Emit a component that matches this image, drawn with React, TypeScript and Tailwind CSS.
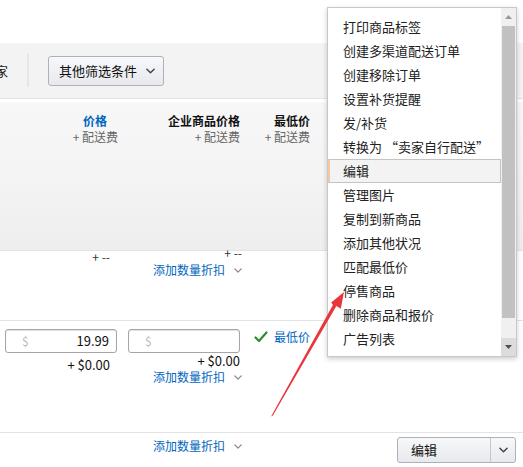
import React from "react";

const menuItems = [
  "打印商品标签",
  "创建多渠道配送订单",
  "创建移除订单",
  "设置补货提醒",
  "发/补货",
  "转换为 “卖家自行配送”",
  "编辑",
  "管理图片",
  "复制到新商品",
  "添加其他状况",
  "匹配最低价",
  "停售商品",
  "删除商品和报价",
  "广告列表",
];

const Chevron = ({ className = "", color = "#555" }: { className?: string; color?: string }) => (
  <svg className={className} viewBox="0 0 10 6" fill="none">
    <path d="M1 1l4 4 4-4" stroke={color} strokeWidth={1.6} strokeLinecap="round" strokeLinejoin="round" />
  </svg>
);

const Discount = () => (
  <div className="flex items-center gap-[9px] text-[12px] leading-[16px] text-[#0066c0]">
    <span>添加数量折扣</span>
    <Chevron className="h-[5px] w-[8px]" color="#888" />
  </div>
);

const PriceInput = ({ value }: { value?: string }) => (
  <div className="flex h-[24px] w-[112px] items-center justify-between rounded-[3px] border border-[#a6a6a6] px-[7px] shadow-[inset_0_1px_1px_rgba(0,0,0,0.12)]">
    <span className="pl-[9px] text-[12px] text-[#bbb]">$</span>
    <span className="text-[13px] text-[#111]">{value}</span>
  </div>
);

export default function App() {
  return (
    <div
      className="relative h-[467px] w-[523px] overflow-hidden bg-white text-[#111]"
      style={{ fontFamily: '"Noto Sans CJK SC", "Liberation Sans", sans-serif' }}
    >
      {/* top strip */}
      <div className="h-[43px] bg-white" />

      {/* filter bar */}
      <div className="flex h-[56px] items-center border-b border-[#e3e3e3] bg-[#f3f3f3]">
        <span className="-ml-[5px] text-[13px] text-[#222]">家</span>
        <div className="ml-[19px] h-[33px] w-[2px] bg-[#e6e6e6]" />
        <button className="ml-[19px] flex h-[30px] w-[116px] items-center gap-[9px] rounded-[3px] border border-[#adb1b8] bg-gradient-to-b from-[#f7f8fa] to-[#e7e9ec] pl-[10px] text-[13px] text-[#111]">
          <span>其他筛选条件</span>
          <Chevron className="h-[6px] w-[9px]" color="#444" />
        </button>
      </div>

      {/* table header */}
      <div className="mt-[3px] h-[148px] border-t border-[#fafafa] bg-gradient-to-b from-[#f7f7f7] via-[#f4f4f4] to-[#eeeeee]">
        <div className="flex pt-[10px] text-[12px] leading-[16px]">
          <div className="flex w-[118px] flex-col items-end">
            <span className="mr-[11px] font-bold text-[#0066c0]">价格</span>
            <span className="text-[#666]">+ 配送费</span>
          </div>
          <div className="flex w-[122px] flex-col items-end">
            <span className="font-bold text-[#111]">企业商品价格</span>
            <span className="text-[#666]">+ 配送费</span>
          </div>
          <div className="flex w-[70px] flex-col items-end">
            <span className="font-bold text-[#111]">最低价</span>
            <span className="text-[#666]">+ 配送费</span>
          </div>
        </div>
      </div>

      {/* row 1 */}
      <div className="flex h-[70px] border-t border-[#e3e3e3]">
        <div className="flex w-[110px] justify-end text-[12px] leading-[12px] text-[#333]">+ --</div>
        <div className="flex w-[132px] flex-col items-end">
          <span className="-mt-[4px] text-[12px] leading-[12px] text-[#333]">+ --</span>
          <div className="mt-[3px]">
            <Discount />
          </div>
        </div>
      </div>

      {/* row 2 */}
      <div className="flex h-[112px] border-t border-[#e3e3e3] pt-[8px]">
        <div className="ml-[5px] flex w-[112px] flex-col items-end">
          <PriceInput value="19.99" />
          <span className="mt-[4px] mr-[7px] text-[13px] leading-[16px] text-[#111]">+ $0.00</span>
        </div>
        <div className="ml-[11px] flex w-[114px] flex-col items-end">
          <div className="mr-[2px]">
            <PriceInput />
          </div>
          <span className="mr-[2px] text-[13px] leading-[16px] text-[#111]">+ $0.00</span>
          <Discount />
        </div>
        <div className="ml-[12px] flex items-start gap-[6px]">
          <svg className="mt-[2px] h-[12px] w-[14px]" viewBox="0 0 14 12" fill="none">
            <path d="M1.5 6.5l3.5 3.5 7.5-8.5" stroke="#2e8b2e" strokeWidth={2.2} strokeLinecap="round" strokeLinejoin="round" />
          </svg>
          <span className="text-[12px] leading-[16px] text-[#0066c0]">最低价</span>
        </div>
      </div>

      {/* row 3 */}
      <div className="flex h-[40px] items-start border-t border-[#e3e3e3]">
        <div className="flex w-[242px] justify-end pt-[5px]">
          <Discount />
        </div>
        <div className="ml-[155px] mt-[4px] flex h-[26px] w-[119px] overflow-hidden rounded-[3px] border border-[#adb1b8] bg-gradient-to-b from-[#f7f8fa] to-[#e7e9ec]">
          <span className="flex w-[93px] items-center border-r border-[#c5c7cb] pl-[13px] text-[13px] text-[#111]">编辑</span>
          <span className="flex flex-1 items-center justify-center">
            <Chevron className="h-[6px] w-[9px]" color="#444" />
          </span>
        </div>
      </div>

      {/* dropdown menu */}
      <div className="absolute left-[327px] top-[7px] flex h-[350px] w-[190px] border border-[#c8c8c8] bg-white shadow-[0_2px_5px_rgba(0,0,0,0.2)]">
        <div className="flex flex-1 flex-col pt-[7px]">
          {menuItems.map((item) =>
            item === "编辑" ? (
              <div
                key={item}
                className="flex h-[24px] items-center border border-[#c4c4c4] border-l-[2px] border-l-[#f4c9a0] bg-[#f3f3f3] pl-[13px] text-[13px] text-[#222]"
              >
                {item}
              </div>
            ) : (
              <div key={item} className="flex h-[24px] items-center pl-[15px] text-[13px] text-[#222]">
                {item}
              </div>
            )
          )}
        </div>
        <div className="flex w-[15px] flex-col bg-[#f0f0f0]">
          <div className="flex h-[18px] items-center justify-center">
            <svg className="h-[4px] w-[7px]" viewBox="0 0 7 4">
              <path d="M0 4L3.5 0 7 4z" fill="#999" />
            </svg>
          </div>
          <div className="mx-[1px] h-[292px] bg-[#c1c1c1]" />
          <div className="flex-1" />
          <div className="flex h-[18px] items-center justify-center bg-[#dcdcdc]">
            <svg className="h-[4px] w-[7px]" viewBox="0 0 7 4">
              <path d="M0 0L7 0 3.5 4z" fill="#505050" />
            </svg>
          </div>
        </div>
      </div>

      {/* red annotation arrow */}
      <svg className="pointer-events-none absolute left-0 top-0 h-[467px] w-[523px]" viewBox="0 0 523 467">
        <polygon
          points="271.1,416.5 272.9,415.5 336.4,306 340.8,308.8 344,292 331.2,302.6 332.9,305"
          fill="#e8373c"
        />
      </svg>
    </div>
  );
}
